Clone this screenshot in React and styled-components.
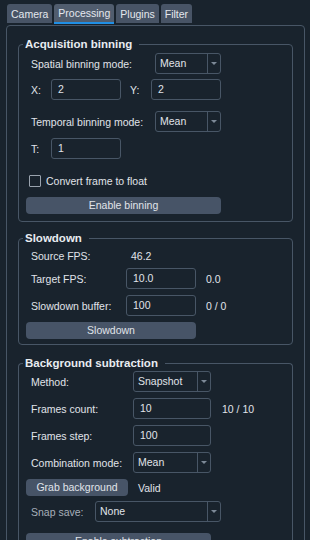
import styled, { createGlobalStyle } from "styled-components";

const GlobalStyle = createGlobalStyle`
  html, body {
    margin: 0;
    padding: 0;
    background: #19232d;
  }
  body {
    font-family: "Liberation Sans", Arial, sans-serif;
    color: #e0e4ea;
  }
`;

const Screen = styled.div`
  width: 310px;
  height: 540px;
  overflow: hidden;
  padding-top: 4px;
  box-sizing: border-box;
`;

const TabBar = styled.div`
  display: flex;
  align-items: flex-start;
  gap: 2px;
  height: 21px;
  padding-left: 7px;
`;

const Tab = styled.div`
  height: ${(p) => (p.$active ? 18 : 19)}px;
  line-height: ${(p) => (p.$active ? 18 : 20)}px;
  padding: 0 4px;
  font-size: 10.5px;
  background: ${(p) => (p.$active ? "#515d6e" : "#485466")};
  border-radius: 3px 3px 0 0;
  border-bottom: ${(p) => (p.$active ? "2px solid #1f8fe5" : "none")};
  color: #e4e8ee;
`;

const Pane = styled.div`
  margin-left: 6px;
  width: 299px;
  height: 620px;
  box-sizing: border-box;
  border: 1px solid #485666;
  border-radius: 4px 4px 0 0;
  display: flex;
  flex-direction: column;
`;

const Group = styled.fieldset`
  margin: ${(p) => p.$top}px 11px 0 11px;
  padding: 0 0 ${(p) => p.$bottom}px 7px;
  border: 1px solid #485666;
  border-radius: 4px;
  min-width: 0;
  ${(p) => (p.$open ? "border-bottom: none; border-radius: 4px 4px 0 0;" : "")}
`;

const Title = styled.legend`
  margin-left: -3px;
  padding: 0 7px 0 2px;
  font-size: 11.5px;
  font-weight: bold;
  line-height: 14px;
  color: #e8ecf1;
`;

const Row = styled.div`
  display: flex;
  align-items: center;
  height: 21px;
  margin-top: ${(p) => p.$mt || 0}px;
  padding-left: 5px;
`;

const Label = styled.span`
  flex: none;
  width: ${(p) => p.$w}px;
  font-size: 10.5px;
  color: ${(p) => (p.$dim ? "#a7afba" : "#e0e4ea")};
  white-space: nowrap;
`;

const Value = styled.span`
  margin-left: ${(p) => p.$ml || 0}px;
  font-size: 10.5px;
  white-space: nowrap;
`;

const SpinBox = styled.div`
  flex: none;
  width: ${(p) => p.$w}px;
  height: 21px;
  box-sizing: border-box;
  border: 1px solid #485666;
  border-radius: 3px;
  padding-left: 6px;
  font-size: 10.5px;
  line-height: 19px;
`;

const Combo = styled.div`
  flex: none;
  display: flex;
  width: ${(p) => p.$w}px;
  height: 21px;
  box-sizing: border-box;
  border: 1px solid #485666;
  border-radius: 3px;
  font-size: 10.5px;
  line-height: 19px;
`;

const ComboText = styled.span`
  flex: 1;
  padding-left: 4px;
`;

const ComboArrow = styled.span`
  flex: none;
  width: 12px;
  border-left: 1px solid #485666;
  display: flex;
  align-items: center;
  justify-content: center;

  &::after {
    content: "";
    border-left: 3px solid transparent;
    border-right: 3px solid transparent;
    border-top: 3px solid #7d8997;
  }
`;

const Button = styled.button`
  display: block;
  width: ${(p) => p.$w}px;
  height: 17px;
  margin-top: ${(p) => p.$mt || 0}px;
  padding: 0;
  border: none;
  border-radius: 4px;
  background: #475467;
  color: #e0e4ea;
  font-family: "Liberation Sans", Arial, sans-serif;
  font-size: 10.5px;
  line-height: 17px;
`;

const InlineButton = styled(Button)`
  margin-top: 0;
`;

const CheckRow = styled.div`
  display: flex;
  align-items: center;
  height: 12px;
  margin-top: ${(p) => p.$mt}px;
  padding-left: 3px;
  gap: 5px;
  font-size: 10.5px;
`;

const Box = styled.span`
  width: 12px;
  height: 12px;
  box-sizing: border-box;
  border: 1px solid #9aa3ae;
  border-radius: 1px;
`;

const ButtonRow = styled.div`
  display: flex;
  align-items: center;
  height: 17px;
  margin-top: ${(p) => p.$mt}px;
`;

const Select = ({ w, children }) => (
  <Combo $w={w}>
    <ComboText>{children}</ComboText>
    <ComboArrow />
  </Combo>
);

export default function App() {
  return (
    <Screen>
      <GlobalStyle />
      <TabBar>
        <Tab>Camera</Tab>
        <Tab $active>Processing</Tab>
        <Tab>Plugins</Tab>
        <Tab>Filter</Tab>
      </TabBar>

      <Pane>
        <Group $top={11} $bottom={7}>
          <Title>Acquisition binning</Title>
          <Row $mt={2}>
            <Label $w={124}>Spatial binning mode:</Label>
            <Select w={66}>Mean</Select>
          </Row>
          <Row $mt={5}>
            <Label $w={20}>X:</Label>
            <SpinBox $w={70}>2</SpinBox>
            <Label $w={21} style={{ marginLeft: 9 }}>Y:</Label>
            <SpinBox $w={70}>2</SpinBox>
          </Row>
          <Row $mt={11}>
            <Label $w={124}>Temporal binning mode:</Label>
            <Select w={66}>Mean</Select>
          </Row>
          <Row $mt={6}>
            <Label $w={20}>T:</Label>
            <SpinBox $w={70}>1</SpinBox>
          </Row>
          <CheckRow $mt={16}>
            <Box />
            Convert frame to float
          </CheckRow>
          <Button $w={195} $mt={10}>Enable binning</Button>
        </Group>

        <Group $top={9} $bottom={5}>
          <Title>Slowdown</Title>
          <Row>
            <Label $w={100}>Source FPS:</Label>
            <Value>46.2</Value>
          </Row>
          <Row $mt={2}>
            <Label $w={95}>Target FPS:</Label>
            <SpinBox $w={70}>10.0</SpinBox>
            <Value $ml={10}>0.0</Value>
          </Row>
          <Row $mt={6}>
            <Label $w={95}>Slowdown buffer:</Label>
            <SpinBox $w={70}>100</SpinBox>
            <Value $ml={10}>0 / 0</Value>
          </Row>
          <Button $w={170} $mt={6}>Slowdown</Button>
        </Group>

        <Group $top={11} $bottom={0} $open>
          <Title>Background subtraction</Title>
          <Row $mt={1}>
            <Label $w={102}>Method:</Label>
            <Select w={78}>Snapshot</Select>
          </Row>
          <Row $mt={6}>
            <Label $w={102}>Frames count:</Label>
            <SpinBox $w={78}>10</SpinBox>
            <Value $ml={11}>10 / 10</Value>
          </Row>
          <Row $mt={6}>
            <Label $w={102}>Frames step:</Label>
            <SpinBox $w={78}>100</SpinBox>
          </Row>
          <Row $mt={6}>
            <Label $w={102}>Combination mode:</Label>
            <Select w={78}>Mean</Select>
          </Row>
          <ButtonRow $mt={6}>
            <InlineButton $w={102}>Grab background</InlineButton>
            <Value $ml={10}>Valid</Value>
          </ButtonRow>
          <Row $mt={5}>
            <Label $w={64} $dim>Snap save:</Label>
            <Select w={126}>None</Select>
          </Row>
          <Button $w={185} $mt={11}>Enable subtraction</Button>
        </Group>
      </Pane>
    </Screen>
  );
}
